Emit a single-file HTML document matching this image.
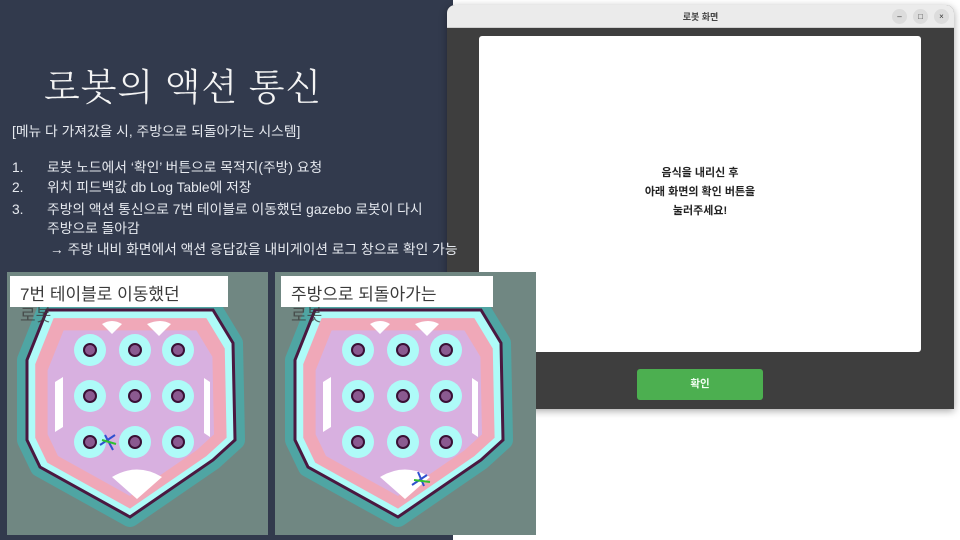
<!DOCTYPE html>
<html><head><meta charset="utf-8"><style>
*{margin:0;padding:0;box-sizing:border-box}
body{width:960px;height:540px;overflow:hidden;background:#fff;position:relative;font-family:"Liberation Sans","Noto Sans CJK KR",sans-serif}
.slide{position:absolute;left:0;top:0;width:453px;height:540px;background:#323a4d}
.title{position:absolute;left:44px;top:57px;font-family:"Noto Serif CJK SC","Liberation Serif",serif;font-size:37px;color:#f4f4f4;font-weight:300;letter-spacing:1px;white-space:nowrap}
.t{position:absolute;color:#e6e9ef;font-size:13.8px;line-height:18px;white-space:nowrap;z-index:5}
.lbl{position:absolute;background:#fff;color:#3a3a3a;font-size:17px;line-height:22px;padding:8px 0 0 10px;height:31px;white-space:nowrap}
.lbl2{position:absolute;color:#3a3a3a;font-size:17px;line-height:22px;opacity:.75}
.win{position:absolute;left:447px;top:5px;width:507px;height:404px;background:#3e3e3e;border-radius:8px 8px 0 0;box-shadow:0 2px 8px rgba(0,0,0,.35);overflow:hidden}
.tb{height:23px;background:#ebebeb;border-bottom:1px solid #cfcfcf;text-align:center;font-size:9px;font-weight:bold;color:#444;line-height:24px}
.btn{position:absolute;width:15px;height:15px;border-radius:50%;background:#dcdcdc;top:4px;font-size:8px;line-height:15px;text-align:center;color:#333}
.panel{position:absolute;left:32px;top:31px;width:442px;height:316px;background:#fff;border-radius:3px;text-align:center;font-size:11px;font-weight:bold;color:#222;line-height:19px;padding-top:128px}
.ok{position:absolute;left:190px;top:364px;width:126px;height:31px;background:#4caf50;border-radius:3px;color:#f3fff3;font-size:10.5px;font-weight:bold;text-align:center;line-height:31px}
</style></head><body>
<div class="slide"></div>
<div class="title">로봇의 액션 통신</div>

<div class="win">
<div class="tb">로봇 화면</div>
<div class="btn" style="left:445px">–</div>
<div class="btn" style="left:466px">□</div>
<div class="btn" style="left:487px">×</div>
<div class="panel">음식을 내리신 후<br>아래 화면의 확인 버튼을<br>눌러주세요!</div>
<div class="ok">확인</div>
</div>

<svg width="960" height="540" style="position:absolute;left:0;top:0">
<defs>
<g id="map">
<rect x="0" y="0" width="261" height="263" fill="#708782"/>
<polygon points="40,38 206,38 226,71 228,168 206,188 123,245 33,195 20,168 20,88" fill="#4fa5a3" stroke="#4fa5a3" stroke-width="20" stroke-linejoin="round"/>
<polygon points="40,38 206,38 226,71 228,168 206,188 123,245 33,195 20,168 20,88" fill="#aefbf8" stroke="#4a1840" stroke-width="3"/>
<g transform="translate(123,140) scale(0.92) translate(-123,-140)"><polygon points="40,38 206,38 226,71 228,168 206,188 123,245 33,195 20,168 20,88" fill="#f0a8b8"/></g>
<g transform="translate(123,140) scale(0.8) translate(-123,-140)"><polygon points="40,38 206,38 226,71 228,168 206,188 123,245 33,195 20,168 20,88" fill="#d8b0e0"/></g>
<path d="M95,52 q10,-6 20,0 l-10,10z M140,52 q14,-6 24,0 l-12,12z M48,110 l8,-5 v50 l-8,5z M203,110 l-6,-4 v55 l6,4z M105,205 q25,-15 50,0 l-25,22z" fill="#fff"/>
<g fill="#aefbf8">
<circle cx="83" cy="78" r="16"/><circle cx="128" cy="78" r="16"/><circle cx="171" cy="78" r="16"/>
<circle cx="83" cy="124" r="16"/><circle cx="128" cy="124" r="16"/><circle cx="171" cy="124" r="16"/>
<circle cx="83" cy="170" r="16"/><circle cx="128" cy="170" r="16"/><circle cx="171" cy="170" r="16"/>
</g>
<g fill="#8a5a90" stroke="#3a1035" stroke-width="2">
<circle cx="83" cy="78" r="6"/><circle cx="128" cy="78" r="6"/><circle cx="171" cy="78" r="6"/>
<circle cx="83" cy="124" r="6"/><circle cx="128" cy="124" r="6"/><circle cx="171" cy="124" r="6"/>
<circle cx="83" cy="170" r="6"/><circle cx="128" cy="170" r="6"/><circle cx="171" cy="170" r="6"/>
</g>
</g>
</defs>
<use href="#map" x="7" y="272"/>
<use href="#map" x="275" y="272"/>
<g stroke-width="2" fill="none">
<path d="M100,445 l15,-10 M105,435 l8,15" stroke="#3050d0"/><path d="M102,440 l14,4" stroke="#30c030"/>
<path d="M412,485 l15,-10 M418,472 l6,14" stroke="#3050d0"/><path d="M414,480 l16,2" stroke="#30c030"/>
</g>
</svg>
<div class="lbl" style="left:10px;top:276px;width:218px">7번 테이블로 이동했던</div>
<div class="lbl2" style="left:20px;top:305px">로봇</div>
<div class="lbl" style="left:281px;top:276px;width:212px">주방으로 되돌아가는</div>
<div class="lbl2" style="left:291px;top:305px">로봇</div>

<div class="t" style="left:12px;top:123px">[메뉴 다 가져갔을 시, 주방으로 되돌아가는 시스템]</div>
<div class="t" style="left:12px;top:159px">1.</div><div class="t" style="left:47px;top:159px">로봇 노드에서 ‘확인’ 버튼으로 목적지(주방) 요청</div>
<div class="t" style="left:12px;top:179px">2.</div><div class="t" style="left:47px;top:179px">위치 피드백값 db Log Table에 저장</div>
<div class="t" style="left:12px;top:201px">3.</div><div class="t" style="left:47px;top:201px">주방의 액션 통신으로 7번 테이블로 이동했던 gazebo 로봇이 다시</div>
<div class="t" style="left:47px;top:220px">주방으로 돌아감</div>
<div class="t" style="left:50px;top:241px">→ 주방 내비 화면에서 액션 응답값을 내비게이션 로그 창으로 확인 가능</div>
</body></html>
